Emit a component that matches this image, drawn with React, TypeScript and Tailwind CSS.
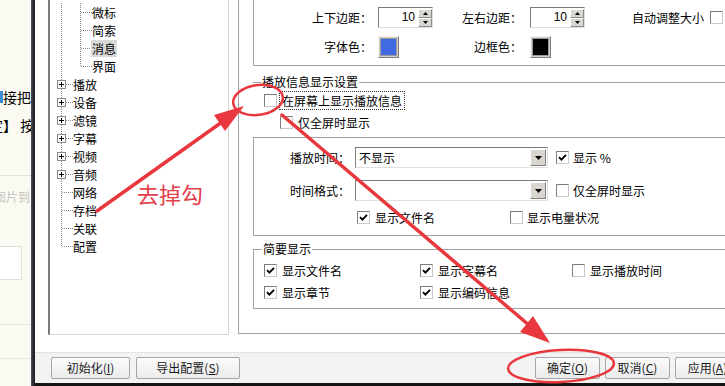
import React from "react";

const DOT = "#8c8c8c";

function Check({ checked }: { checked?: boolean }) {
  return (
    <div className="w-[13px] h-[13px] shrink-0 bg-white border border-t-[#7d7d7d] border-l-[#7d7d7d] border-r-[#c9c9c9] border-b-[#c9c9c9] flex items-center justify-center">
      {checked && (
        <svg width="9" height="9" viewBox="0 0 9 9">
          <path d="M1 4.2 L3.4 6.6 L8 1.8" stroke="#000" strokeWidth="1.9" fill="none" />
        </svg>
      )}
    </div>
  );
}

function SpinBtn({ up }: { up?: boolean }) {
  return (
    <div className="h-[9px] bg-[#d9d6cf] border border-t-white border-l-white border-r-[#8a8a8a] border-b-[#8a8a8a] flex items-center justify-center">
      <svg width="5" height="3" viewBox="0 0 5 3">
        <path d={up ? "M0 3 L2.5 0 L5 3Z" : "M0 0 L2.5 3 L5 0Z"} fill="#000" />
      </svg>
    </div>
  );
}

function Spin() {
  return (
    <div className="flex w-[55px] h-[21px] shrink-0 bg-white border border-t-[#7d7d7d] border-l-[#7d7d7d] border-r-[#e0e0e0] border-b-[#e0e0e0]">
      <div className="flex-1 text-right pr-[3px] leading-[19px] text-[12px] font-['Liberation_Sans',sans-serif]">10</div>
      <div className="w-[14px] flex flex-col justify-center gap-0">
        <SpinBtn up />
        <SpinBtn />
      </div>
    </div>
  );
}

function Combo({ text }: { text?: string }) {
  return (
    <div className="flex w-[193px] h-[21px] shrink-0 bg-white border border-t-[#7d7d7d] border-l-[#7d7d7d] border-r-[#e0e0e0] border-b-[#e0e0e0]">
      <div className="flex-1 pl-[3px] leading-[19px]">{text}</div>
      <div className="w-[16px] h-[17px] my-auto mr-[1px] bg-[#d9d6cf] border border-t-white border-l-white border-r-[#808080] border-b-[#808080] flex items-center justify-center">
        <svg width="7" height="4" viewBox="0 0 7 4">
          <path d="M0 0 L3.5 4 L7 0Z" fill="#000" />
        </svg>
      </div>
    </div>
  );
}

function Swatch({ color }: { color: string }) {
  return (
    <div className="w-[21px] h-[22px] shrink-0 border border-t-[#f4f4f4] border-l-[#f4f4f4] border-r-[#7d7d7d] border-b-[#7d7d7d] bg-[#d4d0c8] p-[1px]">
      <div className="w-full h-full border border-[#9a9a9a]" style={{ backgroundColor: color }} />
    </div>
  );
}

type Node = { t: string; k: "sub" | "plus" | "leaf"; sel?: boolean; last?: boolean };

const tree: Node[] = [
  { t: "微标", k: "sub" },
  { t: "简索", k: "sub" },
  { t: "消息", k: "sub", sel: true },
  { t: "界面", k: "sub", last: true },
  { t: "播放", k: "plus" },
  { t: "设备", k: "plus" },
  { t: "滤镜", k: "plus" },
  { t: "字幕", k: "plus" },
  { t: "视频", k: "plus" },
  { t: "音频", k: "plus" },
  { t: "网络", k: "leaf" },
  { t: "存档", k: "leaf" },
  { t: "关联", k: "leaf" },
  { t: "配置", k: "leaf", last: true },
];

function Gutter({ n }: { n: Node }) {
  const dash = { stroke: DOT, strokeWidth: 1, strokeDasharray: "1 1" };
  if (n.k === "sub") {
    return (
      <svg width="42" height="18" className="shrink-0">
        <line x1="11.5" y1="0" x2="11.5" y2="18" {...dash} />
        <line x1="30.5" y1="0" x2="30.5" y2={n.last ? 10 : 18} {...dash} />
        <line x1="31" y1="9.5" x2="42" y2="9.5" {...dash} />
      </svg>
    );
  }
  if (n.k === "plus") {
    return (
      <svg width="23" height="18" className="shrink-0">
        <line x1="11.5" y1="0" x2="11.5" y2="18" {...dash} />
        <rect x="7.5" y="5.5" width="8" height="8" fill="#fff" stroke="#8a8a8a" />
        <path d="M9 9.5 H14 M11.5 7 V12" stroke="#000" strokeWidth="1" />
        <line x1="16" y1="9.5" x2="23" y2="9.5" {...dash} />
      </svg>
    );
  }
  return (
    <svg width="23" height="18" className="shrink-0">
      <line x1="11.5" y1="0" x2="11.5" y2={n.last ? 10 : 18} {...dash} />
      <line x1="12" y1="9.5" x2="23" y2="9.5" {...dash} />
    </svg>
  );
}

function Btn({ w, label, u, rest }: { w: string; label: string; u: string; rest?: string }) {
  return (
    <div
      className={`${w} h-[22px] shrink-0 rounded-[2px] border border-[#a5a5a5] bg-gradient-to-b from-[#fbfbfb] to-[#ebebeb] flex items-center justify-center text-[12px] text-[#1a1a1a]`}
    >
      <span>
        {label}(<span className="underline">{u}</span>){rest}
      </span>
    </div>
  );
}

export default function App() {
  return (
    <div className="relative w-[725px] h-[386px] overflow-hidden flex bg-white text-[12px] text-black font-['Noto_Sans_CJK_SC','Noto_Sans',sans-serif]">
      {/* background page strip */}
      <div className="w-[31px] shrink-0 h-full bg-[#fbfaf2] overflow-hidden flex flex-col">
        <div className="mt-[89px] h-[16px] flex items-center whitespace-nowrap text-[14px] leading-[16px]">
          <div className="w-[3px] h-[12px] bg-[#3b8fd6] shrink-0" />
          <span>接把</span>
        </div>
        <div className="mt-[12px] h-[16px] whitespace-nowrap text-[14px] leading-[16px] ml-[-11px]">定】 按</div>
        <div className="mt-[42px] h-px bg-[#e2e2dc]" />
        <div className="mt-[12px] whitespace-nowrap text-[12px] text-[#c4c4c0] ml-[-6px]">图片到</div>
        <div className="mt-[40px] ml-[-2px] w-[24px] h-[34px] border border-[#e0e0da] bg-white" />
        <div className="mt-[44px] h-px bg-[#e6e6e0]" />
        <div className="mt-[33px] h-px bg-[#e6e6e0]" />
      </div>
      {/* window frame */}
      <div className="w-[4px] shrink-0 h-full bg-gradient-to-r from-[#50555b] via-[#2a2e33] to-[#1d2024]" />
      {/* dialog */}
      <div className="flex-1 flex flex-col min-w-0">
        <div className="h-[352px] flex pl-[13px] bg-white">
          {/* tree */}
          <div className="w-[181px] h-[335px] shrink-0 border-l-2 border-l-[#7a7a7a] border-r border-r-[#d6d6d6] border-b border-b-[#d6d6d6] pt-[3px] overflow-hidden">
            {tree.map((n) => (
              <div key={n.t} className="h-[18px] flex items-center whitespace-nowrap">
                <Gutter n={n} />
                <span className={`leading-[17px] ${n.sel ? "bg-[#d8d8d8] px-[1px] -ml-[1px]" : ""}`}>{n.t}</span>
              </div>
            ))}
          </div>
          {/* settings panel */}
          <div className="flex-1 ml-[9px] h-[334px] border-l border-b border-[#a3a3a3] pl-[14px] flex flex-col min-w-0">
            {/* top group */}
            <div className="h-[66px] shrink-0 border-l border-b border-[#a3a3a3] pt-[7px] flex flex-col whitespace-nowrap">
              <div className="h-[21px] flex items-center">
                <div className="w-[118px] text-right">上下边距：</div>
                <div className="ml-[6px]">
                  <Spin />
                </div>
                <div className="w-[89px] text-right">左右边距：</div>
                <div className="ml-[8px]">
                  <Spin />
                </div>
                <div className="ml-[47px]">自动调整大小</div>
                <div className="ml-[6px]">
                  <Check />
                </div>
              </div>
              <div className="h-[22px] mt-[8px] flex items-center">
                <div className="w-[118px] text-right">字体色：</div>
                <div className="ml-[6px]">
                  <Swatch color="#4169e1" />
                </div>
                <div className="w-[123px] text-right">边框色：</div>
                <div className="ml-[8px]">
                  <Swatch color="#000000" />
                </div>
              </div>
            </div>
            {/* 播放信息显示设置 */}
            <div className="mt-[9px] h-[14px] flex items-center whitespace-nowrap">
              <div className="w-[8px] h-px bg-[#a3a3a3]" />
              <div className="px-[1px] leading-[14px]">播放信息显示设置</div>
              <div className="flex-1 h-px bg-[#a3a3a3]" />
            </div>
            <div className="mt-[2px] h-[19px] flex items-center whitespace-nowrap">
              <div className="ml-[11px]">
                <Check />
              </div>
              <div className="ml-[2px] px-[2px] h-[19px] border border-dotted border-[#333] leading-[17px]">在屏幕上显示播放信息</div>
            </div>
            <div className="mt-[3px] h-[19px] flex items-center whitespace-nowrap">
              <div className="ml-[27px]">
                <Check />
              </div>
              <div className="ml-[5px]">仅全屏时显示</div>
            </div>
            <div className="mt-[5px] h-[99px] shrink-0 border-t border-l border-b border-[#a3a3a3] flex flex-col whitespace-nowrap">
              <div className="mt-[9px] h-[21px] flex items-center">
                <div className="ml-[36px] w-[65px]">播放时间：</div>
                <Combo text="不显示" />
                <div className="ml-[8px]">
                  <Check checked />
                </div>
                <div className="ml-[4px]">显示 %</div>
              </div>
              <div className="mt-[12px] h-[21px] flex items-center">
                <div className="ml-[36px] w-[65px]">时间格式：</div>
                <Combo />
                <div className="ml-[8px]">
                  <Check />
                </div>
                <div className="ml-[4px]">仅全屏时显示</div>
              </div>
              <div className="mt-[10px] h-[13px] flex items-center">
                <div className="ml-[103px] w-[153px] flex items-center">
                  <Check checked />
                  <span className="ml-[5px]">显示文件名</span>
                </div>
                <Check />
                <span className="ml-[4px]">显示电量状况</span>
              </div>
            </div>
            {/* 简要显示 */}
            <fieldset className="mt-[6px] border-t border-l border-b border-[#a3a3a3] pb-[9px] whitespace-nowrap">
              <legend className="ml-[8px] px-[1px] leading-[14px]">简要显示</legend>
              <div className="mt-[8px] h-[13px] flex items-center">
                <div className="ml-[10px] w-[156px] flex items-center">
                  <Check checked />
                  <span className="ml-[5px]">显示文件名</span>
                </div>
                <div className="w-[152px] flex items-center">
                  <Check checked />
                  <span className="ml-[5px]">显示字幕名</span>
                </div>
                <div className="flex items-center">
                  <Check />
                  <span className="ml-[5px]">显示播放时间</span>
                </div>
              </div>
              <div className="mt-[9px] h-[13px] flex items-center">
                <div className="ml-[10px] w-[156px] flex items-center">
                  <Check checked />
                  <span className="ml-[5px]">显示章节</span>
                </div>
                <div className="w-[152px] flex items-center">
                  <Check checked />
                  <span className="ml-[5px]">显示编码信息</span>
                </div>
              </div>
            </fieldset>
          </div>
        </div>
        {/* bottom bar */}
        <div className="h-[31px] shrink-0 bg-[#f3f3f3] border-t border-[#e3e3e3] flex items-center pl-[16px] whitespace-nowrap">
          <Btn w="w-[79px]" label="初始化" u="I" />
          <div className="ml-[6px]">
            <Btn w="w-[104px]" label="导出配置" u="S" />
          </div>
          <div className="ml-[295px]">
            <Btn w="w-[65px]" label="确定" u="O" />
          </div>
          <div className="ml-[5px]">
            <Btn w="w-[65px]" label="取消" u="C" />
          </div>
          <div className="ml-[5px]">
            <Btn w="w-[65px]" label="应用" u="A" />
          </div>
        </div>
        <div className="h-[3px] shrink-0 bg-[#151515]" />
      </div>

      {/* annotations */}
      <svg className="absolute left-0 top-0 pointer-events-none" width="725" height="386">
        <g stroke="#e8383d" fill="none" strokeLinecap="round">
          <line x1="97" y1="211" x2="222" y2="122" strokeWidth="3.5" />
          <polygon points="244,106 225,131 214,115" fill="#e8383d" stroke="none" />
          <line x1="282" y1="115" x2="530" y2="326" strokeWidth="3.5" />
          <polygon points="550,343 520,332 533,316" fill="#e8383d" stroke="none" />
          <ellipse cx="258" cy="100" rx="25" ry="15" strokeWidth="2.5" transform="rotate(-8 258 100)" />
          <ellipse cx="561" cy="366" rx="53" ry="16" strokeWidth="2.5" transform="rotate(-3 561 366)" />
        </g>
      </svg>
      <div className="absolute left-[137px] top-[178px] text-[22px] leading-[30px] text-[#e2404a] whitespace-nowrap pointer-events-none">
        去掉勾
      </div>
    </div>
  );
}
